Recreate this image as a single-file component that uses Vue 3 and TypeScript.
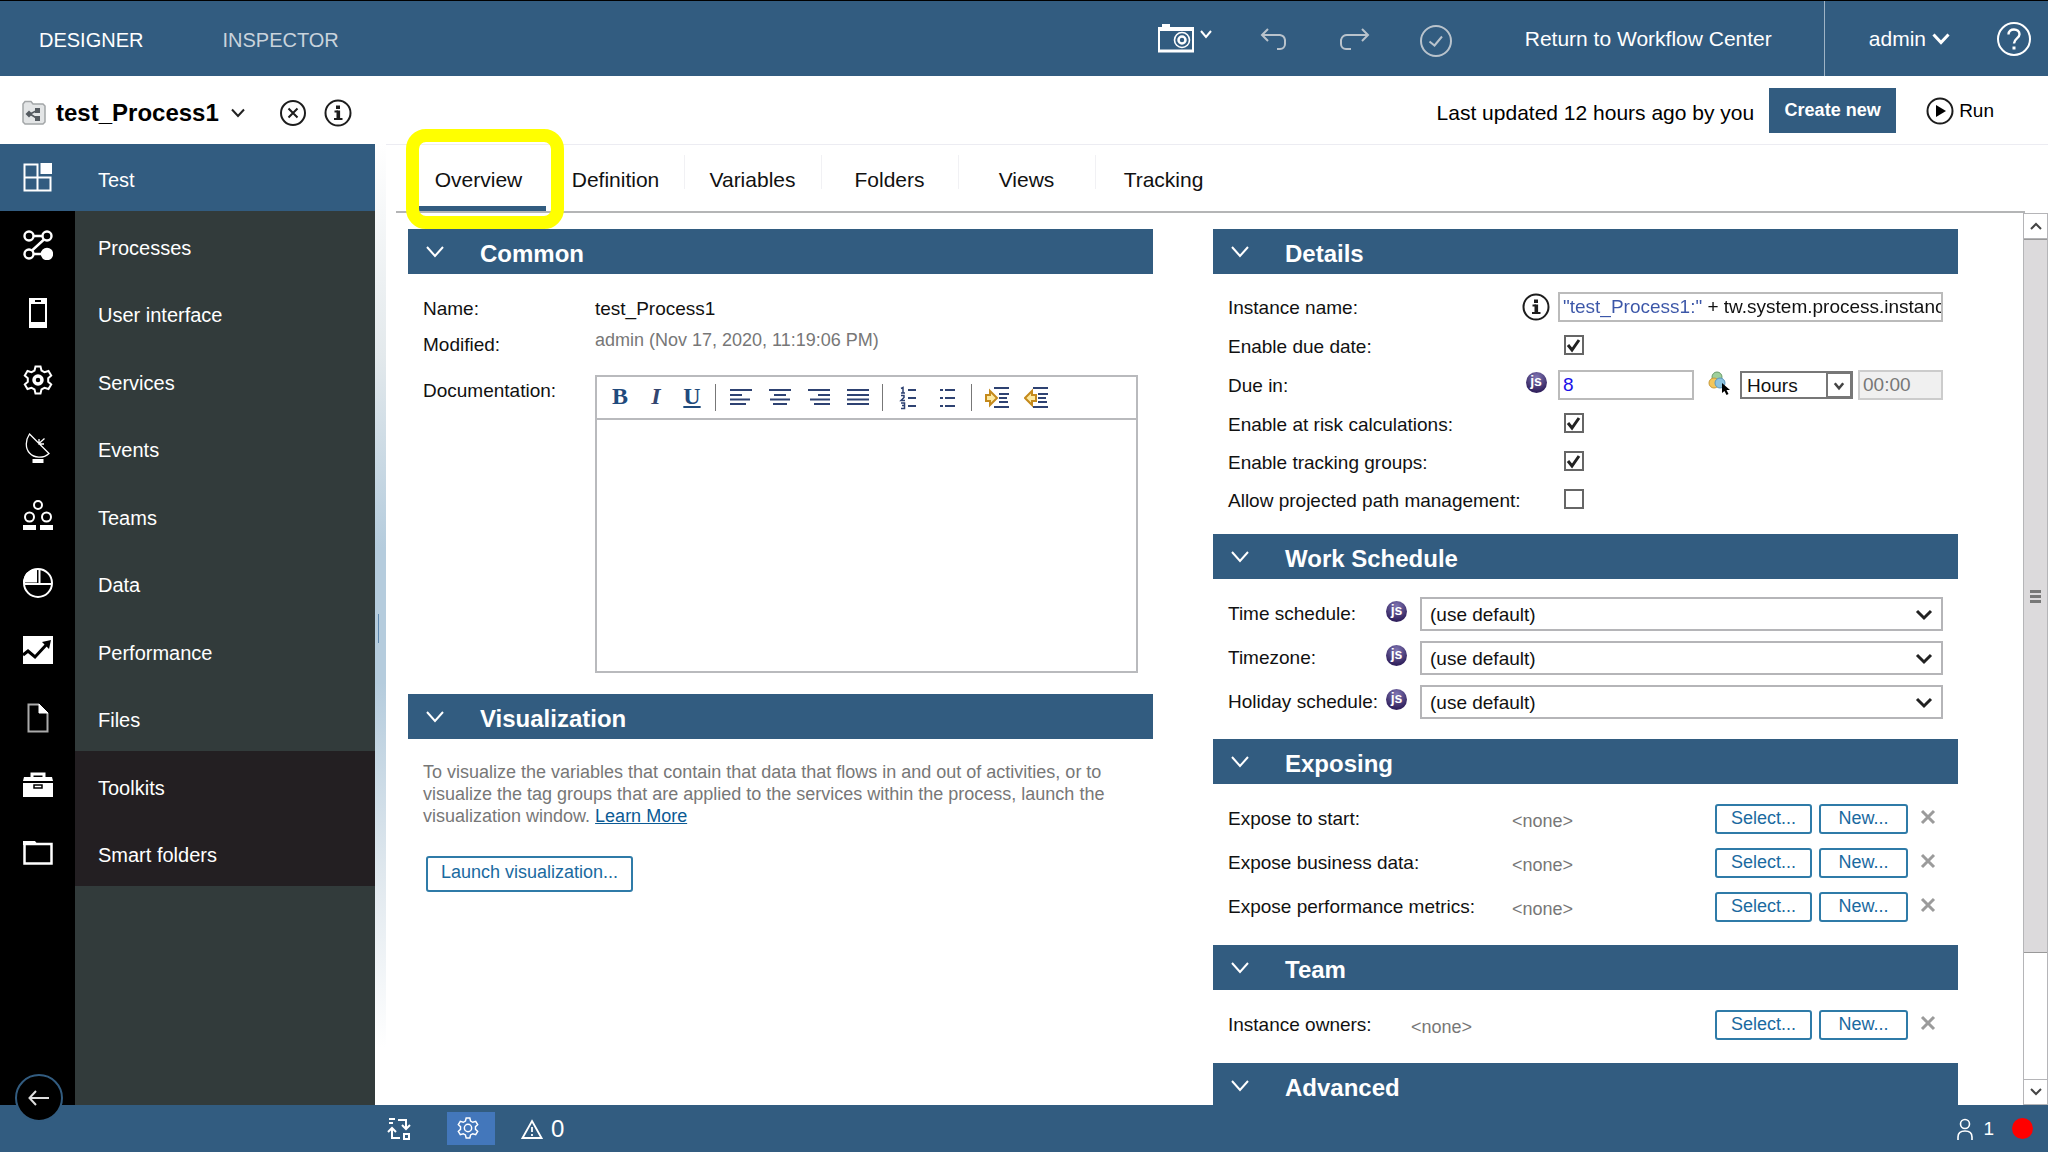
<script setup lang="ts">
import { ref } from 'vue'

interface NavItem {
  id: string
  label: string
  dark?: boolean
}

const navItems: NavItem[] = [
  { id: 'processes', label: 'Processes' },
  { id: 'ui', label: 'User interface' },
  { id: 'services', label: 'Services' },
  { id: 'events', label: 'Events' },
  { id: 'teams', label: 'Teams' },
  { id: 'data', label: 'Data' },
  { id: 'performance', label: 'Performance' },
  { id: 'files', label: 'Files' },
  { id: 'toolkits', label: 'Toolkits', dark: true },
  { id: 'folders', label: 'Smart folders', dark: true },
]

const tabs: string[] = ['Overview', 'Definition', 'Variables', 'Folders', 'Views', 'Tracking']
const activeTab = ref('Overview')

const instanceName = ref('"test_Process1:" + tw.system.process.instanceId')
const dueIn = ref('8')
const dueUnit = ref('Hours')
const enableDueDate = ref(true)
const riskChecks = ref([
  { id: 'risk', label: 'Enable at risk calculations:', on: true },
  { id: 'tracking', label: 'Enable tracking groups:', on: true },
  { id: 'path', label: 'Allow projected path management:', on: false },
])

const schedules = [
  { id: 'time', label: 'Time schedule:' },
  { id: 'zone', label: 'Timezone:' },
  { id: 'holiday', label: 'Holiday schedule:' },
]

const exposures = ['Expose to start:', 'Expose business data:', 'Expose performance metrics:']
</script>

<template>
  <div class="shell">
    <header class="topbar">
      <nav class="modes">
        <a href="#" class="mode">DESIGNER</a>
        <a href="#" class="mode dim">INSPECTOR</a>
      </nav>
      <div class="tools">
        <button class="icon-btn snapshot" aria-label="Snapshot">
          <svg width="54" height="30" viewBox="0 0 54 30" fill="none" stroke="#fff">
            <path d="M4 1.500h8" stroke-width="3" />
            <path d="M0 5h36" stroke-width="4" />
            <path d="M1 4v23M35 4v23" stroke-width="2" />
            <path d="M0 27h36" stroke-width="3" />
            <circle cx="24" cy="16" r="7.500" stroke-width="1.600" />
            <circle cx="24" cy="16" r="3.500" stroke-width="2.500" />
            <path d="M43 7l5 6 5-6" stroke-width="2" />
          </svg>
        </button>
        <button class="icon-btn undo" aria-label="Undo">
          <svg width="32" height="24" viewBox="0 0 32 24" fill="none" stroke="#b9c3cc" stroke-width="2">
            <path d="M9 2L3 8l6 6M3 8h18a6 6 0 0 1 5 5v4a5 5 0 0 1-5 5h-3" />
          </svg>
        </button>
        <button class="icon-btn redo" aria-label="Redo">
          <svg width="32" height="24" viewBox="0 0 32 24" fill="none" stroke="#b9c3cc" stroke-width="2">
            <path d="M23 2l6 6-6 6M29 8H9a6 6 0 0 0-7 5v4a5 5 0 0 0 5 5h5" />
          </svg>
        </button>
        <button class="icon-btn validate" aria-label="Validate">
          <svg width="34" height="34" viewBox="0 0 34 34" fill="none" stroke="#b9c3cc" stroke-width="2">
            <circle cx="17" cy="18" r="15" />
            <path d="M10.500 18.500l5 4 7.500-9" />
          </svg>
        </button>
      </div>
      <a href="#" class="center-link">Return to Workflow Center</a>
      <div class="account">
        <button class="user-btn">
          admin
          <svg width="18" height="12" viewBox="0 0 18 12" fill="none" stroke="#fff" stroke-width="3">
            <path d="M1.500 1.500L9 9.500l7.500-8" />
          </svg>
        </button>
        <button class="icon-btn" aria-label="Help">
          <svg width="36" height="36" viewBox="0 0 36 36" fill="none" stroke="#fff" stroke-width="2">
            <circle cx="18" cy="18" r="16" />
            <path d="M12.500 13.500c0-3.500 2.500-5 5.500-5s5.500 1.800 5.500 4.800c0 4.200-5.500 4-5.500 9.200" stroke-width="2.400" />
            <path d="M18 25.500v3" stroke-width="3" />
          </svg>
        </button>
      </div>
    </header>

    <div class="titlebar">
      <svg width="24" height="26" viewBox="0 0 24 26" fill="none">
        <path d="M1 4l2-2.500h6l2 2.500h10l2 2v16l-2 2H3l-2-2z" fill="#e3e5e6" stroke="#a3a6a8" stroke-width="1.500" />
        <path d="M8 14l8-4M8 14l8 5" stroke="#555b60" stroke-width="1.500" />
        <path d="M7 10.500l3.500 3.500L7 17.500 3.500 14z" fill="#555b60" />
        <path d="M13 8h5v5h-5zM13 16h5v5h-5z" fill="#555b60" />
      </svg>
      <h1 class="title">test_Process1</h1>
      <button class="icon-btn title-menu" aria-label="Process menu">
        <svg width="14" height="10" viewBox="0 0 14 10" fill="none" stroke="#222" stroke-width="2"><path d="M1 1.500l6 6.500 6-6.500" /></svg>
      </button>
      <button class="icon-btn close-btn" aria-label="Close">
        <svg width="28" height="28" viewBox="0 0 28 28" fill="none" stroke="#1d1d1d" stroke-width="2">
          <circle cx="14" cy="14" r="12" />
          <path d="M9.500 9.500l9 9M18.500 9.500l-9 9" />
        </svg>
      </button>
      <button class="icon-btn info-btn" aria-label="Information">
        <svg width="28" height="28" viewBox="0 0 28 28" fill="none" stroke="#1d1d1d">
          <circle cx="14" cy="14" r="12.500" stroke-width="2" />
          <path d="M14 6.500v3.500" stroke-width="4" />
          <path d="M10.500 12.500H14M10 20h8.500" stroke-width="2" />
          <path d="M14.300 11.500V20" stroke-width="3.600" />
        </svg>
      </button>
      <span class="updated">Last updated 12 hours ago by you</span>
      <button class="create-btn">Create new</button>
      <button class="run-btn">
        <svg width="28" height="28" viewBox="0 0 28 28">
          <circle cx="14" cy="14" r="12.500" fill="none" stroke="#1d1d1d" stroke-width="2" />
          <path d="M10 8l10 6-10 6z" fill="#000" />
        </svg>
        Run
      </button>
    </div>

    <div class="body">
      <aside class="sidebar">
        <a href="#" class="nav-row current">
          <span class="nav-icon">
            <svg width="30" height="30" viewBox="0 0 30 30" fill="none" stroke="#fff" stroke-width="2">
              <path d="M1.500 1.500h13v13h-13zM1.500 14.500h13v13h-13zM14.500 14.500h13v13h-13z" />
              <path d="M17.500 0H29v11H17.500z" fill="#fff" stroke="none" />
            </svg>
          </span>
          <span class="nav-label">Test</span>
        </a>
        <nav class="nav-list">
          <a v-for="item in navItems" :key="item.id" href="#" class="nav-row" :class="{ dark: item.dark }">
            <span class="nav-icon">
              <svg width="30" height="30" viewBox="0 0 30 30" fill="none" stroke="#fff" stroke-width="2">
                <g v-if="item.id === 'processes'" stroke-width="2.400">
                  <circle cx="6" cy="6" r="4.500" />
                  <circle cx="24" cy="6" r="4.500" />
                  <circle cx="6" cy="24" r="4.500" />
                  <circle cx="24" cy="24" r="5" fill="#fff" />
                  <path d="M10.500 6h9M21 9.500L9 20.500M10.500 24H20" />
                </g>
                <g v-else-if="item.id === 'ui'">
                  <path fill="#fff" fill-rule="evenodd" stroke="none" d="M6 0h18v30H6zM8 6v18h14V6zM12 2v2h6V2z" />
                </g>
                <g v-else-if="item.id === 'services'">
                  <path d="M12.500 1.500h5l1 4 3 1.700 4-1.200 2.700 4.500-3 2.700v3.600l3 2.700-2.700 4.500-4-1.200-3 1.700-1 4h-5l-1-4-3-1.700-4 1.200-2.700-4.500 3-2.700v-3.600l-3-2.700L4.500 6l4 1.200 3-1.700z" />
                  <circle cx="15" cy="15" r="4" stroke-width="3.500" />
                </g>
                <g v-else-if="item.id === 'events'" stroke-width="1.300">
                  <path d="M6.500 1L26 20.500C20 26 11 25 6.500 20S2.500 7 6.500 1zM16 10.500l5.500-5M16 6v5h5" />
                  <path d="M9.500 28h11" stroke-width="4" />
                </g>
                <g v-else-if="item.id === 'teams'">
                  <circle cx="15" cy="5" r="4" />
                  <circle cx="6.500" cy="17" r="4.500" />
                  <circle cx="23.500" cy="17" r="4.500" />
                  <path d="M0 27.500h13M17 27.500h13" stroke-width="5" />
                </g>
                <g v-else-if="item.id === 'data'">
                  <circle cx="15" cy="15" r="14" />
                  <path d="M13 2v11.500H1C2 6.500 6.500 2.500 13 2z" fill="#fff" />
                  <path d="M1 16h28M16.500 1v15" />
                </g>
                <g v-else-if="item.id === 'performance'">
                  <path d="M0 1h30v28H0z" fill="#fff" stroke="none" />
                  <path d="M0 20l5-4 7 6 12-13" stroke="#000" stroke-width="3" />
                  <path d="M28 5l-2 9-7-7z" fill="#000" stroke="none" />
                </g>
                <g v-else-if="item.id === 'files'" stroke="#aaa">
                  <path d="M16 1.500H5.500v27h19V10" />
                  <path d="M16 1v9h9z" fill="#fff" stroke="#fff" stroke-width="1" />
                </g>
                <g v-else-if="item.id === 'toolkits'">
                  <path d="M9 8V4h12v4" stroke-width="3" />
                  <path d="M1 7h28l1 4H0zM0 13h30v14H0z" fill="#fff" stroke="none" />
                  <path d="M11 15h8v3h-8z" stroke="#000" stroke-width="1.500" />
                </g>
                <g v-else>
                  <path d="M1.500 6h27v19.500h-27z" stroke-width="2.500" />
                  <path d="M0 3h12l3 4H0z" fill="#fff" stroke="none" />
                </g>
              </svg>
            </span>
            <span class="nav-label">{{ item.label }}</span>
          </a>
        </nav>
        <div class="nav-fill"></div>
        <button class="back-btn" aria-label="Collapse menu">
          <svg width="22" height="16" viewBox="0 0 22 16" fill="none" stroke="#ddd" stroke-width="2"><path d="M8 1L1.500 8 8 15M1.500 8H21" /></svg>
        </button>
      </aside>

      <div class="splitter"><span class="grip"></span></div>

      <main class="main">
        <div class="tabs" role="tablist">
          <button
            v-for="tab in tabs"
            :key="tab"
            class="tab"
            :class="{ active: tab === activeTab }"
            role="tab"
            :aria-selected="tab === activeTab"
            @click="activeTab = tab"
          >
            {{ tab }}
          </button>
          <span class="highlight"></span>
        </div>

        <div class="workspace">
          <div class="content">
            <div class="column">
              <section>
                <h2 class="section-head">
                  <svg class="chev" viewBox="0 0 18 12"><path d="M1 1l8 9 8-9" /></svg>Common
                </h2>
                <div class="common-body">
                  <div class="pair">
                    <span class="label">Name:</span>
                    <span class="label">test_Process1</span>
                  </div>
                  <div class="pair modified">
                    <span class="label low">Modified:</span>
                    <span class="muted">admin (Nov 17, 2020, 11:19:06 PM)</span>
                  </div>
                  <div class="pair doc">
                    <label class="label" for="documentation">Documentation:</label>
                    <div class="editor">
                      <div class="editor-tools">
                        <button class="glyph bold">B</button>
                        <button class="glyph italic">I</button>
                        <button class="glyph under">U</button>
                        <span class="sep"></span>
                        <button class="tool" aria-label="Align left">
                          <svg viewBox="0 0 24 24"><path d="M1 4h22M1 9h12M1 13.500h20M1 18h16" /></svg>
                        </button>
                        <button class="tool" aria-label="Align center">
                          <svg viewBox="0 0 24 24"><path d="M1 4h22M6 9h12M2 13.500h20M5 18h14" /></svg>
                        </button>
                        <button class="tool" aria-label="Align right">
                          <svg viewBox="0 0 24 24"><path d="M1 4h22M11 9h12M3 13.500h20M7 18h16" /></svg>
                        </button>
                        <button class="tool" aria-label="Justify">
                          <svg viewBox="0 0 24 24"><path d="M1 4h22M1 9h22M1 13.500h22M1 18h22" /></svg>
                        </button>
                        <span class="sep"></span>
                        <button class="tool" aria-label="Numbered list">
                          <svg viewBox="0 0 24 24">
                            <path d="M12 4h8M12 12h8M12 20h8" />
                            <path d="M5 2.500l2-1V7M5 7h4M5 9.500h3v2L5 14.500h4M5 17h3.500v5.500H5M6 19.500h2.500" stroke-width="1.500" />
                          </svg>
                        </button>
                        <button class="tool" aria-label="Bulleted list">
                          <svg viewBox="0 0 24 24"><path d="M10 4h10M10 12h10M10 20h10M5 4h3M5 12h3M5 20h3" /></svg>
                        </button>
                        <span class="sep"></span>
                        <button class="tool" aria-label="Indent">
                          <svg viewBox="0 0 24 24">
                            <path d="M9 2h15M14 8h10M14 12h8M14 16h9M9 21h15" />
                            <path class="arrow" d="M1 9h4V5l7 7-7 7v-4H1z" />
                          </svg>
                        </button>
                        <button class="tool" aria-label="Outdent">
                          <svg viewBox="0 0 24 24">
                            <path d="M9 2h15M14 8h10M14 12h8M14 16h9M9 21h15" />
                            <path class="arrow" d="M12 9H8V5l-7 7 7 7v-4h4z" />
                          </svg>
                        </button>
                      </div>
                      <textarea id="documentation" class="editor-area"></textarea>
                    </div>
                  </div>
                </div>
              </section>

              <section>
                <h2 class="section-head">
                  <svg class="chev" viewBox="0 0 18 12"><path d="M1 1l8 9 8-9" /></svg>Visualization
                </h2>
                <div class="visual-body">
                  <p class="muted para">
                    To visualize the variables that contain that data that flows in and out of activities, or to
                    visualize the tag groups that are applied to the services within the process, launch the
                    visualization window. <a href="#" class="more">Learn More</a>
                  </p>
                  <button class="outline-btn launch">Launch visualization...</button>
                </div>
              </section>
            </div>

            <div class="column">
              <section>
                <h2 class="section-head">
                  <svg class="chev" viewBox="0 0 18 12"><path d="M1 1l8 9 8-9" /></svg>Details
                </h2>
                <div class="details-body">
                  <div class="field">
                    <label class="label wide" for="instance">Instance name:</label>
                    <span class="mark">
                      <svg width="28" height="28" viewBox="0 0 28 28" fill="none" stroke="#1d1d1d">
                        <circle cx="14" cy="14" r="12.500" stroke-width="2" />
                        <path d="M14 6.500v3.500" stroke-width="4" />
                        <path d="M10.500 12.500H14M10 20h8.500" stroke-width="2" />
                        <path d="M14.300 11.500V20" stroke-width="3.600" />
                      </svg>
                    </span>
                    <input id="instance" v-model="instanceName" class="box grow expression" type="text" />
                  </div>
                  <div class="field slim">
                    <label class="label wide" for="duedate">Enable due date:</label>
                    <span class="mark"></span>
                    <span class="tick">
                      <input id="duedate" v-model="enableDueDate" type="checkbox" />
                      <svg v-if="enableDueDate" viewBox="0 0 20 20"><path d="M4 10l4 5 7-10" /></svg>
                    </span>
                  </div>
                  <div class="field">
                    <label class="label wide" for="duein">Due in:</label>
                    <span class="mark"><span class="js">js</span></span>
                    <input id="duein" v-model="dueIn" class="box due" type="text" />
                    <svg class="globe" width="24" height="24" viewBox="0 0 24 24">
                      <circle cx="9" cy="6" r="5" fill="#9fcf9b" stroke="#6a9c6b" />
                      <circle cx="6" cy="12" r="5" fill="#f3c65c" stroke="#c79a38" />
                      <circle cx="12" cy="12" r="5" fill="#8cc3e0" stroke="#5a96bd" />
                      <path d="M14 12v10l2.500-2 2 4 2-1-2-4H22z" fill="#000" />
                    </svg>
                    <span class="unit">
                      <select v-model="dueUnit" aria-label="Due unit">
                        <option>Hours</option>
                        <option>Minutes</option>
                        <option>Days</option>
                      </select>
                      <svg viewBox="0 0 26 26"><path d="M8 11l5 6 5-6" /></svg>
                    </span>
                    <input class="box clock" type="text" value="00:00" disabled aria-label="Due time" />
                  </div>
                  <div v-for="check in riskChecks" :key="check.id" class="field slim">
                    <label class="label wide" :for="check.id">{{ check.label }}</label>
                    <span class="mark"></span>
                    <span class="tick">
                      <input :id="check.id" v-model="check.on" type="checkbox" />
                      <svg v-if="check.on" viewBox="0 0 20 20"><path d="M4 10l4 5 7-10" /></svg>
                    </span>
                  </div>
                </div>
              </section>

              <section>
                <h2 class="section-head">
                  <svg class="chev" viewBox="0 0 18 12"><path d="M1 1l8 9 8-9" /></svg>Work Schedule
                </h2>
                <div class="details-body">
                  <div v-for="row in schedules" :key="row.id" class="field tall">
                    <label class="label mid" :for="row.id">{{ row.label }}</label>
                    <span class="mark small"><span class="js">js</span></span>
                    <span class="picker">
                      <select :id="row.id"><option>(use default)</option></select>
                      <svg viewBox="0 0 18 12"><path d="M2 2l7 7 7-7" /></svg>
                    </span>
                  </div>
                </div>
              </section>

              <section>
                <h2 class="section-head">
                  <svg class="chev" viewBox="0 0 18 12"><path d="M1 1l8 9 8-9" /></svg>Exposing
                </h2>
                <div class="actions-body">
                  <div v-for="name in exposures" :key="name" class="action">
                    <span class="label far">{{ name }}</span>
                    <span class="muted none">&lt;none&gt;</span>
                    <button class="outline-btn select">Select...</button>
                    <button class="outline-btn new">New...</button>
                    <button class="icon-btn remove" aria-label="Clear">
                      <svg width="16" height="16" viewBox="0 0 16 16"><path d="M2 2l12 12M14 2L2 14" stroke="#9b9b9b" stroke-width="3" /></svg>
                    </button>
                  </div>
                </div>
              </section>

              <section>
                <h2 class="section-head">
                  <svg class="chev" viewBox="0 0 18 12"><path d="M1 1l8 9 8-9" /></svg>Team
                </h2>
                <div class="actions-body">
                  <div class="action">
                    <span class="label near">Instance owners:</span>
                    <span class="muted none">&lt;none&gt;</span>
                    <button class="outline-btn select">Select...</button>
                    <button class="outline-btn new">New...</button>
                    <button class="icon-btn remove" aria-label="Clear">
                      <svg width="16" height="16" viewBox="0 0 16 16"><path d="M2 2l12 12M14 2L2 14" stroke="#9b9b9b" stroke-width="3" /></svg>
                    </button>
                  </div>
                </div>
              </section>

              <section>
                <h2 class="section-head">
                  <svg class="chev" viewBox="0 0 18 12"><path d="M1 1l8 9 8-9" /></svg>Advanced
                </h2>
              </section>
            </div>
          </div>

          <div class="scrollbar">
            <button class="scroll-btn" aria-label="Scroll up">
              <svg width="12" height="8" viewBox="0 0 12 8"><path d="M1 7l5-5 5 5" /></svg>
            </button>
            <div class="track">
              <div class="thumb"><i></i><i></i><i></i></div>
            </div>
            <button class="scroll-btn" aria-label="Scroll down">
              <svg width="12" height="8" viewBox="0 0 12 8"><path d="M1 1l5 5 5-5" /></svg>
            </button>
          </div>
        </div>
      </main>
    </div>

    <footer class="statusbar">
      <button class="icon-btn swap" aria-label="Variables view">
        <svg width="24" height="24" viewBox="0 0 24 24" fill="none" stroke="#fff" stroke-width="2">
          <path d="M2 2h6M2 6h4M11 3h8v8M15 8l4 4 4-4M13 21H5v-8M1 15l4-4 4 4M17 17h5v5h-5z" />
        </svg>
      </button>
      <button class="gear-btn" aria-label="Settings">
        <svg width="22" height="22" viewBox="0 0 30 30" fill="none" stroke="#fff" stroke-width="2">
          <path d="M12.500 1.500h5l1 4 3 1.700 4-1.200 2.700 4.500-3 2.700v3.600l3 2.700-2.700 4.500-4-1.200-3 1.700-1 4h-5l-1-4-3-1.700-4 1.200-2.700-4.500 3-2.700v-3.600l-3-2.700L4.500 6l4 1.200 3-1.700z" />
          <circle cx="15" cy="15" r="5" />
        </svg>
      </button>
      <span class="warnings">
        <svg width="22" height="20" viewBox="0 0 22 20" fill="none" stroke="#fff" stroke-width="1.800">
          <path d="M11 2l9.500 17h-19z" />
          <path d="M11 8v5M11 15v2" />
        </svg>
        0
      </span>
      <span class="users">
        <svg width="16" height="22" viewBox="0 0 16 22" fill="none" stroke="#fff" stroke-width="1.600">
          <circle cx="8" cy="6" r="4.500" />
          <path d="M1 22v-3c0-4 3-6 7-6s7 2 7 6v3" />
        </svg>
        1
      </span>
      <span class="record"></span>
    </footer>
  </div>
</template>

<style>
body {
  margin: 0;
}
</style>

<style scoped>
.shell {
  display: flex;
  flex-direction: column;
  height: 100vh;
  overflow: hidden;
  box-sizing: border-box;
  background: #fff;
  color: #111;
  font-family: "Liberation Sans", Arial, sans-serif;
  font-size: 19px;
}
.shell * {
  box-sizing: border-box;
}
button,
input,
select,
textarea {
  margin: 0;
  padding: 0;
  border: 0;
  border-radius: 0;
  background: none;
  color: inherit;
  font: inherit;
}
a {
  color: inherit;
  text-decoration: none;
}
svg {
  display: block;
  flex: none;
}
.icon-btn {
  display: flex;
  flex: none;
}

.topbar {
  display: flex;
  flex: none;
  align-items: center;
  height: 76px;
  border-top: 1px solid #000;
  background: #325c80;
  color: #fff;
  font-size: 21px;
}
.modes {
  display: flex;
  flex: 1;
  gap: 79px;
  padding: 3px 0 0 39px;
  font-size: 20px;
}
.dim {
  color: #c9d3dc;
}
.tools {
  display: flex;
  align-items: center;
}
.undo {
  margin-left: 47px;
}
.redo {
  margin-left: 48px;
}
.validate {
  margin: 2px 0 0 48px;
}
.center-link {
  margin: 0 52px 0 72px;
}
.account {
  display: flex;
  align-items: center;
  gap: 46px;
  align-self: stretch;
  padding: 0 16px 0 44px;
  border-left: 1px solid #9fb4c6;
}
.user-btn {
  display: flex;
  align-items: center;
  gap: 6px;
}

.titlebar {
  display: flex;
  flex: none;
  align-items: center;
  height: 68px;
  padding: 5px 54px 0 22px;
  color: #000;
}
.title {
  margin: 0 0 0 10px;
  font-size: 24px;
  line-height: 28px;
}
.title-menu {
  margin-left: 12px;
}
.close-btn {
  margin-left: 34px;
}
.info-btn {
  margin-left: 17px;
}
.updated {
  flex: 1;
  text-align: right;
  font-size: 21px;
}
.create-btn {
  width: 127px;
  height: 45px;
  margin: 0 30px 4px 15px;
  background: #325c80;
  color: #fff;
  font-size: 18px;
  font-weight: bold;
}
.run-btn {
  display: flex;
  align-items: center;
  gap: 5px;
  margin-bottom: 4px;
}

.body {
  display: flex;
  flex: 1;
  min-height: 0;
}
.sidebar {
  position: relative;
  display: flex;
  flex: none;
  flex-direction: column;
  width: 375px;
  background: linear-gradient(90deg, #000 75px, #323b3b 75px);
  color: #fff;
  font-size: 20px;
}
.nav-row {
  display: flex;
  align-items: center;
  height: 67px;
}
.nav-list .nav-row:nth-child(odd) {
  height: 68px;
}
.nav-row.current {
  background: #325c80;
}
.nav-icon {
  display: flex;
  flex: none;
  justify-content: center;
  width: 75px;
}
.nav-label {
  display: flex;
  flex: 1;
  align-items: center;
  align-self: stretch;
  padding: 6px 0 0 23px;
}
.dark .nav-label {
  background: #231f22;
}
.nav-fill {
  flex: 1;
}
.back-btn {
  position: absolute;
  bottom: -17px;
  left: 15px;
  display: flex;
  align-items: center;
  justify-content: center;
  width: 48px;
  height: 48px;
  border: 2px solid #325c80;
  border-radius: 50%;
  background: #000;
}
.splitter {
  display: flex;
  flex: none;
  align-items: center;
  width: 11px;
  padding-top: 8px;
  background: linear-gradient(#fff, #e3e9ec 22%, #b5ccdd 42%, #b5ccdd 56%, #e0e8ee 76%, #fff 94%);
}
.grip {
  width: 1px;
  height: 29px;
  margin-left: 3px;
  background: #5d87ad;
}

.main {
  display: flex;
  flex: 1;
  flex-direction: column;
  min-width: 0;
  border-top: 1px solid #ececf2;
}
.tabs {
  position: relative;
  display: flex;
  flex: none;
  height: 68px;
  margin: 0 23px 0 10px;
  padding-left: 14px;
  border-bottom: 2px solid #b4b5b6;
}
.tab {
  position: relative;
  width: 137px;
  padding-top: 4px;
  font-size: 21px;
}
.tab:nth-child(n + 3)::before {
  position: absolute;
  top: 10px;
  bottom: 22px;
  left: 0;
  width: 1px;
  background: #f1f1f4;
  content: "";
}
.tab.active::after {
  position: absolute;
  right: 1px;
  bottom: 0;
  left: 8px;
  height: 5px;
  background: #325c80;
  content: "";
}
.highlight {
  position: absolute;
  top: -16px;
  left: 10px;
  width: 158px;
  height: 100px;
  border: 13px solid #ff0;
  border-radius: 20px;
  pointer-events: none;
}

.workspace {
  display: flex;
  flex: 1;
  min-height: 0;
}
.content {
  display: flex;
  flex: 1;
  gap: 60px;
  min-width: 0;
  overflow: hidden;
  padding: 16px 65px 0 22px;
}
.column {
  flex: 1;
  min-width: 0;
}
.section-head {
  display: flex;
  align-items: center;
  height: 45px;
  margin: 0;
  padding: 4px 0 0 18px;
  background: #325c80;
  color: #fff;
  font-size: 24px;
  line-height: 28px;
}
.chev {
  width: 18px;
  height: 12px;
  margin: 0 36px 4px 0;
  fill: none;
  stroke: #fff;
  stroke-width: 2;
}
.label {
  flex: none;
  color: #111;
  line-height: 22px;
  white-space: nowrap;
}
.muted {
  color: #777;
  font-size: 18px;
  line-height: 22px;
}
.common-body {
  padding: 24px 15px 21px;
}
.pair {
  display: grid;
  grid-template-columns: 172px 1fr;
}
.modified {
  height: 27px;
  margin: 9px 0 19px;
}
.low {
  align-self: end;
}
.doc .label {
  padding-top: 5px;
}
.editor {
  display: flex;
  flex-direction: column;
  height: 298px;
  border: 2px solid #b9babd;
}
.editor-tools {
  display: flex;
  flex: none;
  align-items: center;
  height: 43px;
  padding-left: 5px;
  border-bottom: 2px solid #b9babd;
}
.glyph {
  width: 36px;
  padding-bottom: 3px;
  color: #1f4a7c;
  font-family: "Liberation Serif", serif;
  font-size: 24px;
  font-weight: bold;
  line-height: 28px;
}
.italic {
  color: #33456f;
  font-style: italic;
}
.under {
  text-decoration: underline;
}
.sep {
  width: 1px;
  height: 27px;
  margin: 0 5px;
  background: #777;
}
.tool {
  display: flex;
  justify-content: center;
  width: 39px;
}
.tool svg {
  width: 24px;
  height: 24px;
  fill: none;
  stroke: #2e4272;
  stroke-width: 2;
}
.tool .arrow {
  fill: #fde9a0;
  stroke: #c58a1c;
}
.editor-area {
  flex: 1;
  padding: 8px;
  outline: 0;
  resize: none;
}
.visual-body {
  padding: 22px 15px;
}
.para {
  max-width: 700px;
  margin: 0 0 29px;
}
.more {
  display: inline-block;
  color: #0b5a94;
  text-decoration: underline;
}
.outline-btn {
  flex: none;
  height: 30px;
  padding-bottom: 1px;
  border: 2px solid #2f7ba8;
  border-radius: 3px;
  color: #1a6aa0;
  font-size: 18px;
}
.launch {
  width: 207px;
  height: 36px;
  margin-left: 3px;
  padding-bottom: 3px;
}

.details-body {
  display: flex;
  flex-direction: column;
  gap: 10px;
  padding: 18px 15px 20px;
}
.field {
  display: flex;
  align-items: center;
  height: 30px;
}
.field .wide {
  padding-top: 2px;
}
.slim {
  height: 28px;
}
.tall {
  height: 34px;
}
.wide {
  width: 287px;
}
.mid {
  width: 154px;
}
.mark {
  display: flex;
  flex: none;
  justify-content: center;
  width: 43px;
  padding-right: 1px;
}
.mark.small {
  justify-content: flex-start;
  width: 38px;
  padding-left: 4px;
}
.js {
  width: 21px;
  height: 21px;
  margin-bottom: 6px;
  border-radius: 50%;
  background: radial-gradient(circle at 50% 25%, #8076b4, #33235f 75%);
  color: #fff;
  font-size: 14px;
  font-weight: bold;
  line-height: 18px;
  text-align: center;
}
.box {
  height: 30px;
  min-width: 0;
  padding: 0 4px 1px 3px;
  border: 2px solid #bbb;
}
.grow {
  flex: 1;
}
.expression {
  background: linear-gradient(90deg, #3b56a8 143px, #111 143px) text;
  color: transparent;
}
.due {
  width: 136px;
  color: #1a10e8;
}
.globe {
  margin: 0 8px 4px 14px;
}
.unit {
  position: relative;
  width: 113px;
  height: 28px;
  margin-right: 5px;
  border: 2px solid #777;
}
.unit select {
  width: 100%;
  height: 100%;
  padding-left: 5px;
  appearance: none;
}
.unit svg {
  position: absolute;
  top: -1px;
  right: -1px;
  width: 26px;
  height: 26px;
  border: 2px solid #777;
  fill: none;
  stroke: #444;
  stroke-width: 3;
  pointer-events: none;
}
.clock {
  flex: 1;
  border-color: #ccc;
  background: #f0f0f0;
  color: #777;
}
.tick {
  position: relative;
  width: 20px;
  height: 20px;
  margin: 0 0 2px 6px;
}
.tick input {
  display: block;
  width: 20px;
  height: 20px;
  border: 2px solid #666;
  appearance: none;
}
.tick svg {
  position: absolute;
  inset: 0;
  fill: none;
  stroke: #222;
  stroke-width: 3;
  pointer-events: none;
}
.picker {
  position: relative;
  flex: 1;
}
.picker select {
  width: 100%;
  height: 34px;
  padding-left: 8px;
  border: 2px solid #b5b5b8;
  appearance: none;
}
.picker svg {
  position: absolute;
  top: 12px;
  right: 10px;
  width: 18px;
  height: 12px;
  fill: none;
  stroke: #222;
  stroke-width: 3;
  pointer-events: none;
}
.actions-body {
  display: flex;
  flex-direction: column;
  gap: 14px;
  padding: 20px 22px 23px 15px;
}
.action {
  display: flex;
  align-items: center;
  gap: 7px;
  height: 30px;
}
.far {
  width: 277px;
}
.near {
  width: 176px;
}
.none {
  flex: 1;
  padding-top: 3px;
}
.select {
  width: 97px;
}
.new {
  width: 89px;
}
.remove {
  margin: 0 0 4px 5px;
}

.scrollbar {
  display: flex;
  flex: none;
  flex-direction: column;
  width: 25px;
  border: 1px solid #b5b5b8;
}
.scroll-btn {
  display: flex;
  flex: none;
  align-items: center;
  justify-content: center;
  height: 24px;
}
.scroll-btn svg {
  fill: none;
  stroke: #444;
  stroke-width: 2;
}
.track {
  flex: 1;
  border-top: 1px solid #b5b5b8;
  border-bottom: 1px solid #b5b5b8;
}
.thumb {
  display: flex;
  flex-direction: column;
  align-items: center;
  justify-content: center;
  gap: 2px;
  height: 85%;
  border-top: 1px solid #999;
  border-bottom: 1px solid #999;
  background: #dcdadc;
}
.thumb i {
  width: 11px;
  height: 3px;
  background: #777;
}

.statusbar {
  display: flex;
  flex: none;
  align-items: center;
  height: 47px;
  padding: 0 15px 0 387px;
  background: #325c80;
  color: #fff;
}
.gear-btn {
  display: flex;
  align-items: center;
  justify-content: center;
  width: 48px;
  height: 33px;
  margin: 0 26px 0 36px;
  padding: 0 6px 2px 0;
  background: #4377bb;
}
.warnings {
  display: flex;
  flex: 1;
  align-items: center;
  gap: 8px;
  font-size: 24px;
}
.users {
  display: flex;
  align-items: center;
  gap: 10px;
}
.record {
  width: 21px;
  height: 21px;
  margin-left: 18px;
  border-radius: 50%;
  background: #f00;
}
</style>
